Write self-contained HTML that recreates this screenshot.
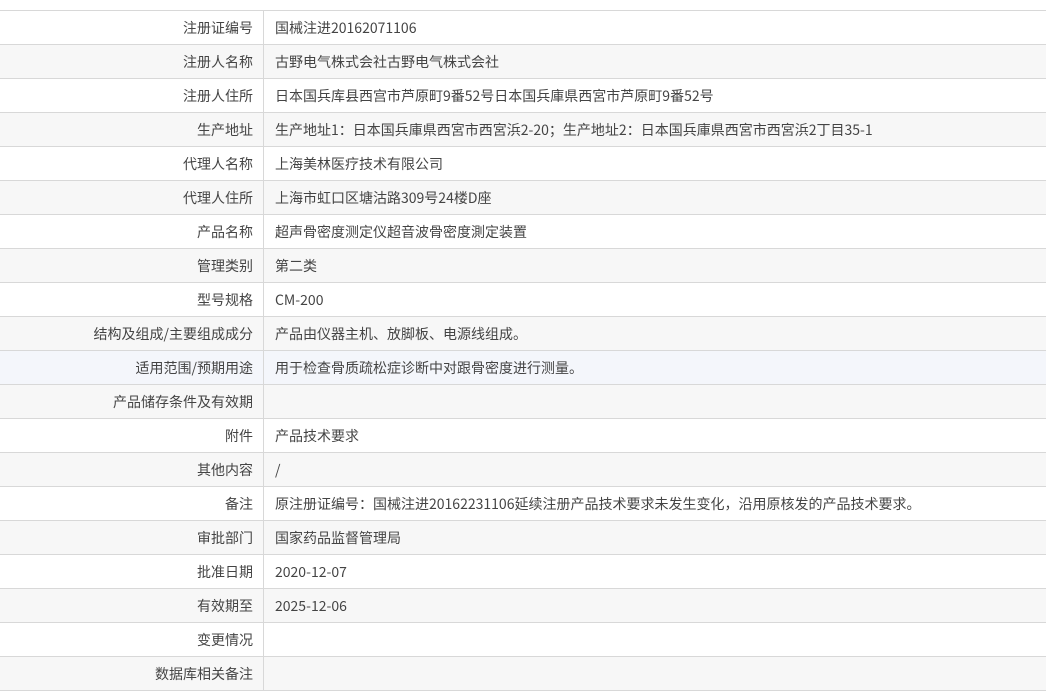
<!DOCTYPE html>
<html><head><meta charset="utf-8"><style>
body{margin:0;background:#fff;font-family:"Noto Sans CJK SC","Liberation Sans",sans-serif;font-size:14px;color:#444;}
table{position:absolute;top:10px;left:0;width:1046px;border-collapse:collapse;}
td{height:33px;border-top:1px solid #d8d8d8;border-bottom:1px solid #d8d8d8;padding:0;line-height:33px;white-space:nowrap;}
td span{position:relative;top:1px;}
td.l{width:253px;text-align:right;padding-right:10px;border-right:1px solid #d8d8d8;}
td.v{padding-left:11px;}
tr:nth-child(even) td{background:#f7f7f7;}
tr.h td{background:#f4f6fb;}
</style></head><body>
<table>
<tr><td class="l"><span>注册证编号</span></td><td class="v"><span>国械注进20162071106</span></td></tr>
<tr><td class="l"><span>注册人名称</span></td><td class="v"><span>古野电气株式会社古野电气株式会社</span></td></tr>
<tr><td class="l"><span>注册人住所</span></td><td class="v"><span>日本国兵库县西宫市芦原町9番52号日本国兵庫県西宮市芦原町9番52号</span></td></tr>
<tr><td class="l"><span>生产地址</span></td><td class="v"><span>生产地址1：日本国兵庫県西宮市西宮浜2-20；生产地址2：日本国兵庫県西宮市西宮浜2丁目35-1</span></td></tr>
<tr><td class="l"><span>代理人名称</span></td><td class="v"><span>上海美林医疗技术有限公司</span></td></tr>
<tr><td class="l"><span>代理人住所</span></td><td class="v"><span>上海市虹口区塘沽路309号24楼D座</span></td></tr>
<tr><td class="l"><span>产品名称</span></td><td class="v"><span>超声骨密度测定仪超音波骨密度測定装置</span></td></tr>
<tr><td class="l"><span>管理类别</span></td><td class="v"><span>第二类</span></td></tr>
<tr><td class="l"><span>型号规格</span></td><td class="v"><span>CM-200</span></td></tr>
<tr><td class="l"><span>结构及组成/主要组成成分</span></td><td class="v"><span>产品由仪器主机、放脚板、电源线组成。</span></td></tr>
<tr class="h"><td class="l"><span>适用范围/预期用途</span></td><td class="v"><span>用于检查骨质疏松症诊断中对跟骨密度进行测量。</span></td></tr>
<tr><td class="l"><span>产品储存条件及有效期</span></td><td class="v"></td></tr>
<tr><td class="l"><span>附件</span></td><td class="v"><span>产品技术要求</span></td></tr>
<tr><td class="l"><span>其他内容</span></td><td class="v"><span>/</span></td></tr>
<tr><td class="l"><span>备注</span></td><td class="v"><span>原注册证编号：国械注进20162231106延续注册产品技术要求未发生变化，沿用原核发的产品技术要求。</span></td></tr>
<tr><td class="l"><span>审批部门</span></td><td class="v"><span>国家药品监督管理局</span></td></tr>
<tr><td class="l"><span>批准日期</span></td><td class="v"><span>2020-12-07</span></td></tr>
<tr><td class="l"><span>有效期至</span></td><td class="v"><span>2025-12-06</span></td></tr>
<tr><td class="l"><span>变更情况</span></td><td class="v"></td></tr>
<tr><td class="l"><span>数据库相关备注</span></td><td class="v"></td></tr>
</table>
</body></html>
